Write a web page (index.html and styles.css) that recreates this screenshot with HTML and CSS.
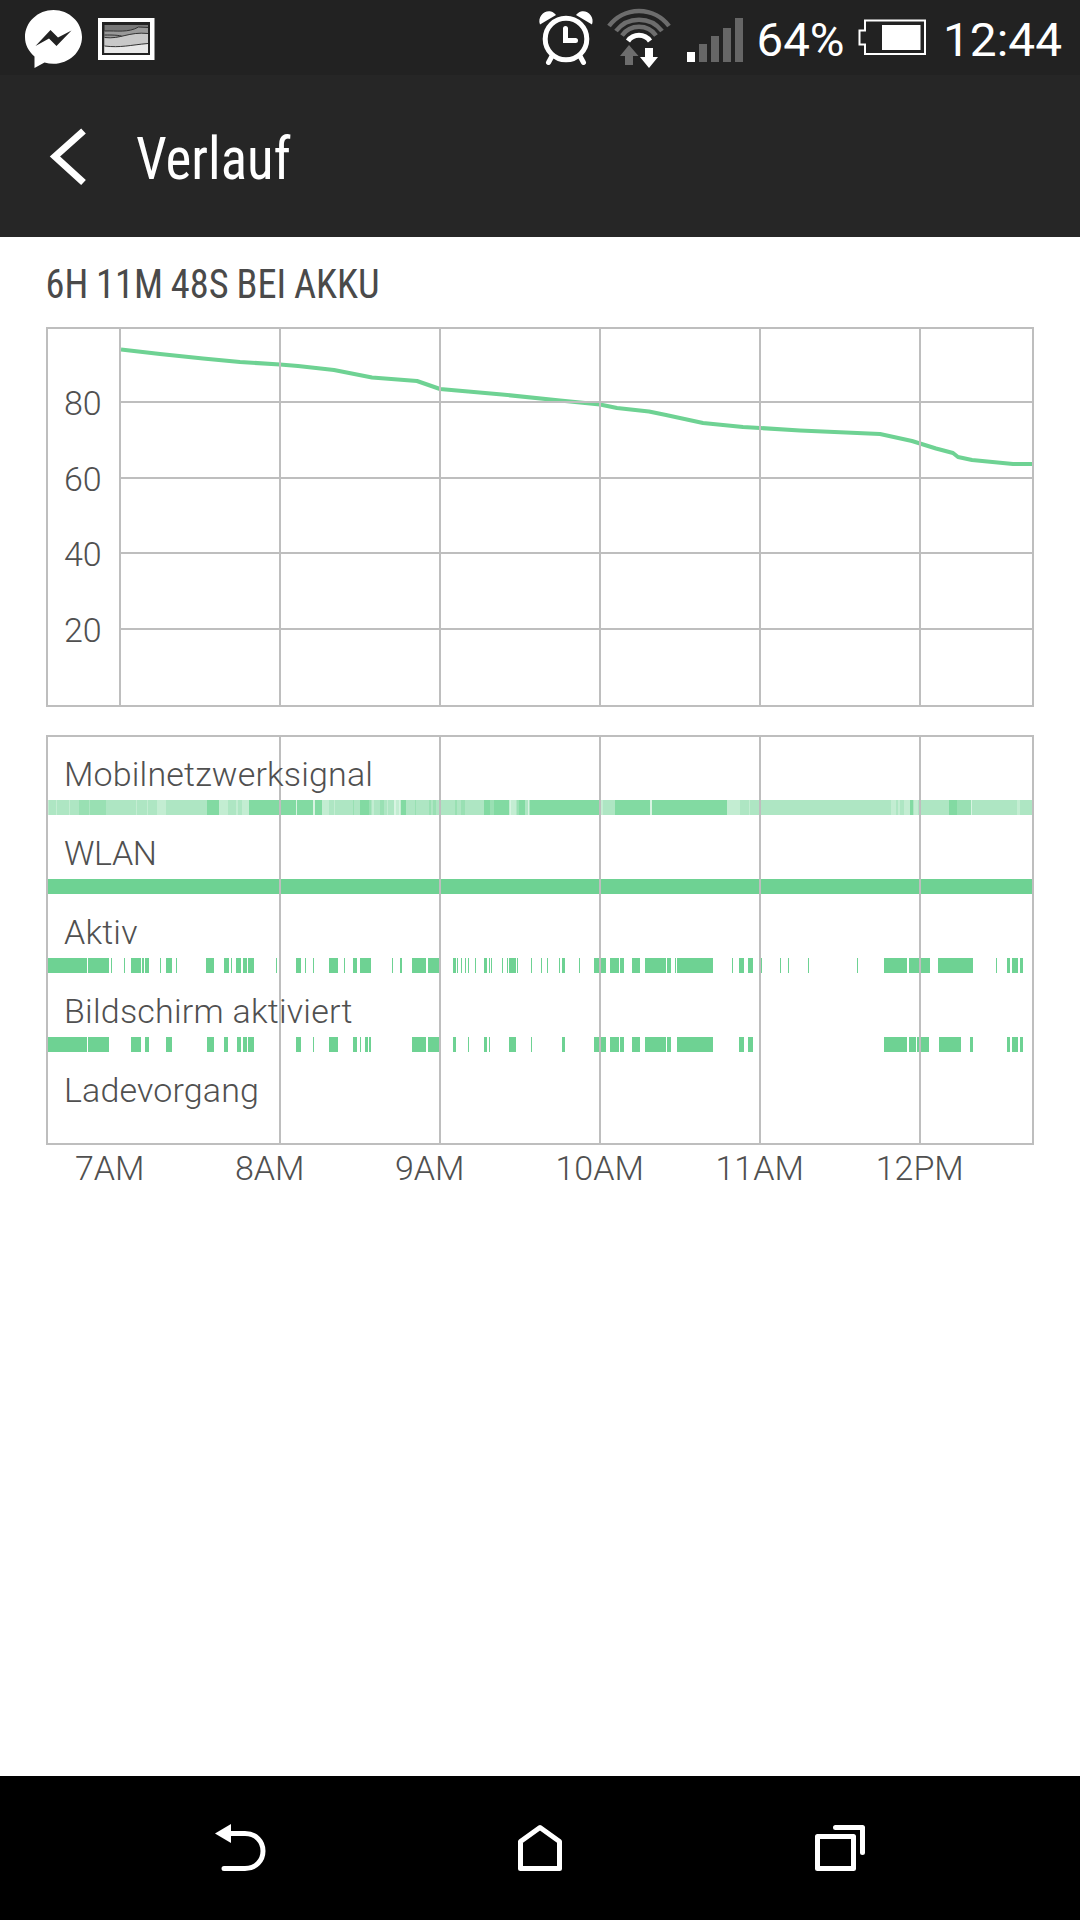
FILE: index.html
```html
<!DOCTYPE html>
<html lang="de">
<head>
<meta charset="utf-8">
<title>Verlauf</title>
<link rel="stylesheet" href="styles.css">
</head>
<body>
<div class="screen">
  <header class="status">
    <svg class="status-left" width="180" height="75" viewBox="0 0 180 75">
      <path fill="#fff" d="M53.500 10C38 10 25 22 25 37c0 8 3.500 14 9.500 19.500V68l10-5.500c3 .9 6 1.300 9 1.300C69 63.800 82 52 82 37S69 10 53.500 10z"/>
      <path fill="#222" d="M35.500 46 50.500 30 58 37.500 71.500 30.500 56.500 46 49 38.500z"/>
      <path fill="#fff" d="M98 18h56.500v42H98z"/>
      <path fill="#222" d="M102 22h48v33h-48z"/>
      <path fill="#777" d="M104.500 25H148v28h-43.500z"/>
      <path fill="#999" d="M104.500 31c12-.5 24 2 34-4l9.500.5V53h-43.500z"/>
      <path fill="#c8c8c8" d="M104.500 37.500c16 2 24-6 43.500-4V53h-43.500z"/>
      <path fill="#e8e8e8" d="M104.500 46c16 2 26-1 43.500-2.500V53h-43.500z"/>
      <path fill="none" stroke="#333" d="M104.500 31c12-.5 24 2 34-4l9.500.5M104.500 37.500c16 2 24-6 43.500-4M104.500 46c16 2 26-1 43.500-2.500M104.500 35c8 0 12 0 17 1"/>
    </svg>
    <svg class="status-right" width="560" height="75" viewBox="520 0 560 75">
      <g fill="none" stroke="#fff" stroke-width="5" stroke-linecap="round">
        <circle cx="566" cy="39" r="20.800"/>
        <path d="M565.500 28.500V40.500H575.500M551.500 57l-3 5.500M580.500 57l3 5.500"/>
      </g>
      <path fill="#fff" d="M540 24.500c-3-8 5-15 11-13 2 .6 4 2 5 3.500zM592 24.500c3-8-5-15-11-13-2 .6-4 2-5 3.500z"/>
      <g fill="none" stroke="#6d6d6d" stroke-width="4.500">
        <path d="M609 26a37.500 37.500 0 0 1 60 0M616 31a29 29 0 0 1 46 0M622 35.500a21 21 0 0 1 34 0"/>
        <path stroke="#fff" stroke-width="5" d="M628 41a13.500 13.500 0 0 1 22 0"/>
      </g>
      <path fill="#6d6d6d" d="M629 45l9.500 11H633v9h-8v-9h-5z"/>
      <path fill="#fff" d="M645 48h8v9h5l-9 11-9-11h5z"/>
      <path fill="#666" d="M699 44h8v18h-8zM711 36h8v26h-8zM723 28h8v34h-8zM735 18h8v44h-8z"/>
      <path fill="#fff" d="M687 52h8v10h-8z"/>
      <text class="status-text" x="756.500" y="56" textLength="88" lengthAdjust="spacingAndGlyphs">64%</text>
      <path fill="none" stroke="#fff" stroke-width="2" d="M865 20.500h60v33.500h-60v-9.500h-5.500v-14h5.500z"/>
      <path fill="#fff" d="M882 25h38.500v25H882z"/>
      <text class="status-text" x="943" y="56" textLength="119" lengthAdjust="spacingAndGlyphs">12:44</text>
    </svg>
  </header>
  <div class="actionbar">
    <svg class="back" width="44" height="60" viewBox="46 125 44 60"><path fill="none" stroke="#fff" stroke-width="7" d="M83.500 130 55 155.500l28.500 26"/></svg>
    <h1 class="title"><svg width="180" height="80" viewBox="130 115 180 80"><text x="136" y="179" textLength="155" lengthAdjust="spacingAndGlyphs">Verlauf</text></svg></h1>
  </div>
  <main class="content">
    <h2 class="heading"><svg width="400" height="60" viewBox="46 250 400 60"><text x="45.500" y="298" textLength="334" lengthAdjust="spacingAndGlyphs">6H 11M 48S BEI AKKU</text></svg></h2>
    <svg class="chart level" width="988" height="380" viewBox="46 327 988 380">
      <path class="curve" d="M121 349.500 160 354 203 358.500 240 362 280 364.500 298 366 334 370 372 377.500 417 381 440 389 502 394.500 560 400.500 600 404.500 617 408 649 411.500 666 415 703 423 743 427 760 428 800 430.500 880 434 912 441 936 448.500 953 453 958 457 972 460 1013 464H1032"/>
      <path class="grid" d="M47 328H1033V706H47zM120 328V706M280 328V706M440 328V706M600 328V706M760 328V706M920 328V706M120 402H1033M120 478H1033M120 553H1033M120 629H1033"/>
      <g class="label">
        <text x="64" y="415">80</text>
        <text x="64" y="491">60</text>
        <text x="64" y="566">40</text>
        <text x="64" y="642">20</text>
      </g>
    </svg>
    <svg class="chart usage" width="988" height="465" viewBox="46 735 988 465">
      <!-- mobile signal strength: weaker signal is lighter -->
      <path class="bar s2" d="M48 807.500H1032"/>
      <path class="bar s1" d="M48 807.500h1M56 807.500h1M69 807.500h1M136 807.500h1M147 807.500h1M157 807.500h9M219 807.500h9M236 807.500h2M242 807.500h7M322 807.500h7M334 807.500h1M372 807.500h2M387 807.500h1M394 807.500h7M509 807.500h7M601 807.500h2M727 807.500h13M749 807.500h1M891 807.500h5M898 807.500h2M904 807.500h6M914 807.500h4M1017 807.500h3"/>
      <path class="bar s3" d="M79 807.500h10M90 807.500h16M353 807.500h1M369 807.500h2M380 807.500h4M415 807.500h1M429 807.500h2M433 807.500h3M455 807.500h2M461 807.500h4M490 807.500h4M517 807.500h2M957 807.500h14"/>
      <path class="bar s4" d="M207 807.500h12M249 807.500h73M360 807.500h9M401 807.500h5M484 807.500h6M494 807.500h15M519 807.500h6M530 807.500h69M615 807.500h112M910 807.500h3M949 807.500h8"/>
      <path class="bar s0" d="M296 807.500h1M313 807.500h2M394 807.500h2M399 807.500h1M510 807.500h1M528 807.500h1M650 807.500h2M971 807.500h1"/>
      <path class="bar" d="M48 886.500H1032"/>
      <path class="bar" d="M48 965.500H87M88 965.500H109M111 965.500h1M124 965.500h1M131 965.500H141M142 965.500H144M145 965.500H149M160 965.500h1M166 965.500H172M176 965.500h1M206 965.500H214M224 965.500H229M231 965.500h1M236 965.500H241M243 965.500H247M248 965.500H254M276 965.500h1M296 965.500H301M305 965.500h1M313 965.500h1M329 965.500H338M344 965.500h1M353 965.500H357M360 965.500H371M392 965.500h1M400 965.500H402M412 965.500H426M428 965.500H439M453 965.500H456M457 965.500h1M461 965.500h1M465 965.500h1M468 965.500h1M475 965.500h1M484 965.500H487M489 965.500h1M491 965.500h1M502 965.500h1M507 965.500h1M509 965.500H516M517 965.500h1M531 965.500h1M541 965.500h1M547 965.500h1M559 965.500h1M562 965.500H565M579 965.500h1M594 965.500H606M610 965.500H619M620 965.500H624M632 965.500H640M645 965.500H666M667 965.500H671M675 965.500h1M677 965.500H713M732 965.500h1M739 965.500H744M748 965.500H753M761 965.500h1M780 965.500h1M788 965.500h1M808 965.500h1M857 965.500h1M884 965.500H907M909 965.500H930M938 965.500H973M996 965.500h1M1007 965.500H1010M1012 965.500H1018M1020 965.500H1023"/>
      <path class="bar" d="M48 1044.500H87M88 1044.500H109M131 1044.500H141M145 1044.500H149M166 1044.500H172M207 1044.500H214M224 1044.500H228M237 1044.500H241M243 1044.500H247M248 1044.500H254M296 1044.500H301M313 1044.500h1M329 1044.500H338M353 1044.500H357M360 1044.500h1M365 1044.500H368M369 1044.500H371M412 1044.500H426M428 1044.500H439M453 1044.500H456M468 1044.500h1M484 1044.500H487M489 1044.500h1M509 1044.500H516M531 1044.500h1M562 1044.500H565M594 1044.500H606M610 1044.500H619M620 1044.500H624M632 1044.500H640M645 1044.500H666M667 1044.500H671M677 1044.500H713M739 1044.500H744M748 1044.500H753M884 1044.500H907M909 1044.500H916M917 1044.500H929M939 1044.500H961M970 1044.500H973M1007 1044.500H1010M1012 1044.500H1018M1020 1044.500H1023"/>
      <path class="grid" d="M47 736H1033V1144H47zM280 736V1144M440 736V1144M600 736V1144M760 736V1144M920 736V1144"/>
      <g class="label">
        <text x="64" y="786" textLength="309">Mobilnetzwerksignal</text>
        <text x="64" y="865" textLength="93">WLAN</text>
        <text x="64" y="944" textLength="73.500">Aktiv</text>
        <text x="64" y="1023" textLength="288.500">Bildschirm aktiviert</text>
        <text x="64" y="1102" textLength="195">Ladevorgang</text>
      </g>
      <g class="label axis">
        <text x="109.700" y="1180">7AM</text>
        <text x="269.700" y="1180">8AM</text>
        <text x="429.700" y="1180">9AM</text>
        <text x="599.700" y="1180">10AM</text>
        <text x="759.700" y="1180">11AM</text>
        <text x="919.700" y="1180">12PM</text>
      </g>
    </svg>
  </main>
  <nav class="navbar">
    <svg width="60" height="60" viewBox="210 1818 60 60"><path fill="#fff" d="M215 1833.500l16-9.500v19z"/><path fill="none" stroke="#fff" stroke-width="5" stroke-linecap="round" d="M230 1833.500h15c11 0 18 8 18 17.500s-7 17.500-18 17.500h-21"/></svg>
    <svg width="60" height="60" viewBox="510 1818 60 60"><path fill="none" stroke="#fff" stroke-width="5" stroke-linejoin="round" d="M520.500 1841.500 540 1827.500l19.500 14v27h-39z"/></svg>
    <svg width="60" height="60" viewBox="810 1818 60 60"><path fill="none" stroke="#fff" stroke-width="5" stroke-linejoin="round" stroke-linecap="round" d="M817.500 1836.500h36v32h-36zM835.500 1827.500h27v25"/></svg>
  </nav>
</div>
</body>
</html>
```
FILE: styles.css
```css
body { margin: 0; background: #fff; font-family: Roboto, "Liberation Sans", sans-serif; }
svg { display: block; flex: none; }
.screen { width: 1080px; height: 1920px; display: flex; flex-direction: column; overflow: hidden; }
.status { height: 75px; flex: none; display: flex; justify-content: space-between; background: #222; }
.status-text { font-size: 47px; font-weight: 400; fill: #fff; }
.actionbar { height: 162px; flex: none; display: flex; align-items: center; gap: 40px; padding-left: 46px; box-sizing: border-box; background: #262626; }
.title, .heading { margin: 0; font-family: "Roboto Condensed", Roboto, sans-serif; font-weight: 400; }
.title { font-size: 59px; fill: #fff; }
.title svg { position: relative; top: -1px; }
.content { flex: 1; display: flex; flex-direction: column; padding: 13px 46px 0; }
.heading { height: 60px; margin-bottom: 17px; font-size: 40px; word-spacing: -1px; fill: #4a4a4a; }
.level { margin-bottom: 28px; }
.grid { fill: none; stroke: #bebebe; stroke-width: 2; shape-rendering: crispEdges; }
.curve { fill: none; stroke: #6ed293; stroke-width: 4; stroke-linejoin: round; }
.bar { fill: none; stroke: #6ed293; stroke-width: 15; shape-rendering: crispEdges; }
.s0 { stroke: #d8f4e2; }
.s1 { stroke: #c3edd2; }
.s2 { stroke: #aee6c3; }
.s3 { stroke: #99e0b3; }
.s4 { stroke: #82daa2; }
.label { font-size: 34px; font-weight: 300; fill: #505050; }
.axis { text-anchor: middle; }
.navbar { height: 144px; flex: none; display: flex; justify-content: center; align-items: center; gap: 240px; background: #000; }
```
